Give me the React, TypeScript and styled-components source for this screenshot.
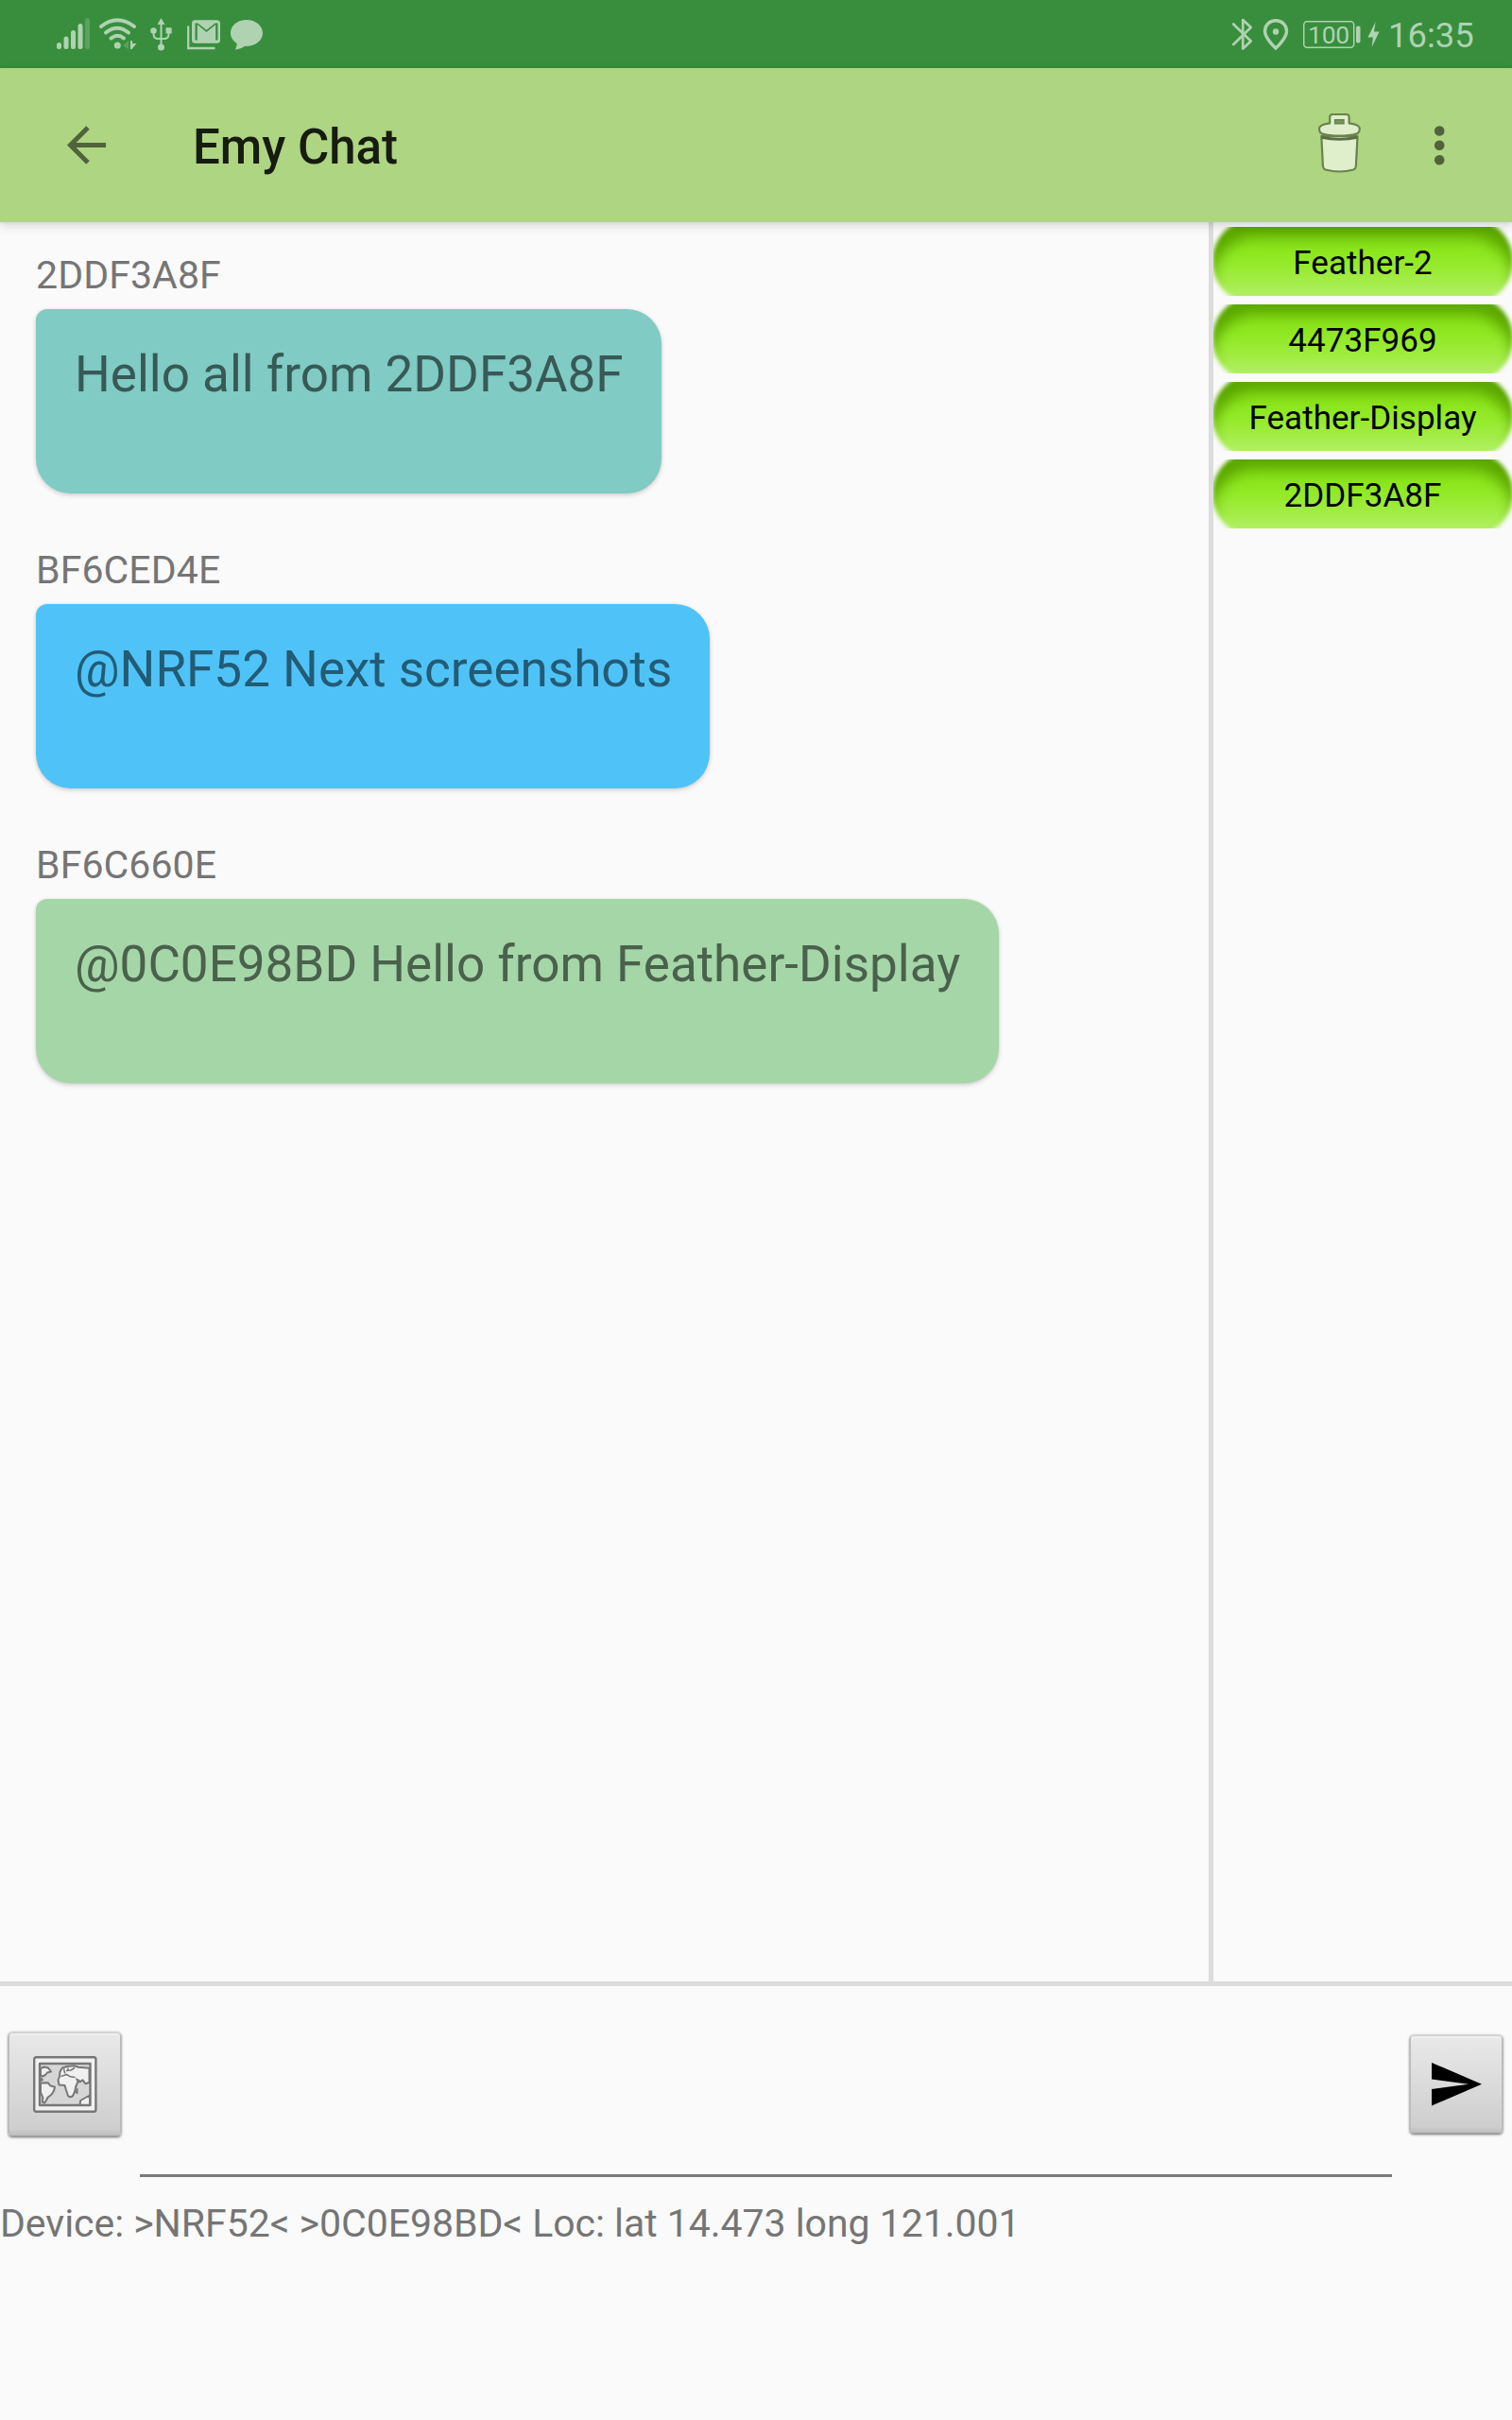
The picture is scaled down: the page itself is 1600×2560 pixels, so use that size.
import React from 'react';
import styled, { createGlobalStyle } from 'styled-components';

const GlobalStyle = createGlobalStyle`
  *, *::before, *::after { box-sizing: border-box; }
  body { margin: 0; background: #fafafa; font-family: Roboto, sans-serif; }
  svg { display: block; flex: none; }
`;

const Screen = styled.div`
  width: 1600px;
  height: 2560px;
  display: flex;
  flex-direction: column;
  background: #fafafa;
  overflow: hidden;
`;

const StatusBar = styled.div`
  height: 72px;
  flex: none;
  display: flex;
  justify-content: space-between;
  background: #388e3c;
  color: #afd2b1;
`;

const StatusGroup = styled.div`
  display: flex;
`;

const Clock = styled.span`
  font-size: 36.4px;
  line-height: 75px;
  width: 131px;
  white-space: nowrap;
`;

const AppBar = styled.header`
  height: 163px;
  flex: none;
  display: flex;
  align-items: center;
  background: #aed581;
  position: relative;
  z-index: 1;
  box-shadow: 0 4px 10px rgba(0, 0, 0, 0.13), 0 0 4px rgba(0, 0, 0, 0.1);
`;

const AppTitle = styled.h1`
  margin: 0 auto 0 92px;
  padding-top: 4px;
  font-size: 51px;
  font-weight: 500;
  line-height: 60px;
  color: #171c11;
`;

const IconButton = styled.button<{ $width: number; $before?: number }>`
  width: ${p => p.$width}px;
  margin-left: ${p => p.$before ?? 0}px;
  padding: 0;
  border: 0;
  background: none;
`;

const Body = styled.div`
  height: 1861px;
  flex: none;
  display: flex;
`;

const Messages = styled.main`
  width: 1279px;
  padding: 32px 0 0 38px;
`;

const Message = styled.article`
  height: 312px;
`;

const Sender = styled.div`
  height: 60px;
  font-size: 41px;
  line-height: 48px;
  letter-spacing: 0.1px;
  color: #757575;
`;

const Bubble = styled.div<{ $color: string; $ink: string; $width: number }>`
  width: ${p => p.$width}px;
  height: 195px;
  padding: 38px 0 0 41px;
  border-radius: 12px 37px 37px 37px;
  background: ${p => p.$color};
  color: ${p => p.$ink};
  font-size: 53px;
  line-height: 62px;
  white-space: nowrap;
  box-shadow: 0 2px 5px rgba(0, 0, 0, 0.17), 0 0 3px rgba(0, 0, 0, 0.07);
`;

const Members = styled.aside`
  width: 321px;
  padding-top: 5px;
  border-left: 5px solid #dcdcdc;
  display: flex;
  flex-direction: column;
  gap: 9px;
`;

const MemberButton = styled.button`
  height: 73px;
  flex: none;
  padding: 3px 0 0;
  border: 0;
  display: flex;
  align-items: center;
  justify-content: center;
  position: relative;
  overflow: hidden;
  background: none;
  font-family: inherit;
  font-size: 35px;
  letter-spacing: 0.05px;
  color: #000;
`;

const Pill = styled.span`
  position: absolute;
  inset: -9px -1px;
  border-radius: 46px;
  background: linear-gradient(#8be51a 30px, #93ea28 46px, #a3ec46 66px, #b0f063 82px);
  box-shadow: inset 0 20px 14px 0 #5ba600;
  filter: blur(2px);
`;

const MemberName = styled.span`
  position: relative;
`;

const Composer = styled.footer`
  height: 459px;
  border-top: 5px solid #dcdcdc;
`;

const InputRow = styled.div`
  height: 202px;
  display: flex;
`;

const ToolButton = styled.button<{ $width: number; $height: number; $top: number; $left: number }>`
  width: ${p => p.$width}px;
  height: ${p => p.$height}px;
  margin: ${p => p.$top}px 0 0 ${p => p.$left}px;
  flex: none;
  padding: 0;
  border: 1px solid;
  border-color: #d0d0d0 #bababa #a0a0a0;
  border-radius: 4px;
  display: flex;
  align-items: center;
  justify-content: center;
  background: linear-gradient(#e9e9e9, #dcdcdc 45%, #cecece 94%, #bdbdbd);
  box-shadow: 0 1px 3px rgba(0, 0, 0, 0.5), 0 0 3px rgba(0, 0, 0, 0.2), inset 0 2px 1px rgba(255, 255, 255, 0.3);
`;

const MessageInput = styled.input`
  width: 1325px;
  height: 202px;
  margin-left: 20px;
  padding: 0;
  border: 0;
  border-bottom: 3px solid #7b7b7b;
  outline: 0;
  background: none;
  font: 53px Roboto, sans-serif;
`;

const DeviceStatus = styled.div`
  padding-top: 25px;
  font-size: 41px;
  line-height: 48px;
  letter-spacing: -0.04px;
  color: #757575;
  white-space: nowrap;
`;

/* Signal, Wi-Fi, USB and notification glyphs share one canvas. */
const NotificationIcons = () => (
  <svg width="300" height="72" viewBox="0 0 300 72" fill="none" stroke="currentColor" strokeLinecap="round">
    <g strokeWidth="5">
      <path d="M62.5 47.5v2M70 41v8.5M77.5 34.5v15M85 27.500v22" />
      <path d="M92.500 21.500v28" opacity=".3" />
    </g>
    <g strokeWidth="4">
      <path d="M107 28Q124 14.500 142 28M112 34.500Q124 25 136 34.500M117.500 40.500Q124.500 35 131 40.500" />
    </g>
    <circle cx="124.300" cy="48" r="3.500" fill="currentColor" stroke="none" />
    <path d="M130 48l6-5v9z" fill="currentColor" stroke="none" opacity=".3" />
    <path d="M138 43h2v3h4.500l-5 6H138z" fill="currentColor" stroke="none" />
    <g strokeWidth="2">
      <path d="M170.500 24v26M162.500 32v4q0 5 5 5h6q5 0 5-5v-4" />
      <g fill="currentColor" stroke="none">
        <path d="M170.500 19l4 7h-8z" />
        <circle cx="162.500" cy="32.500" r="3.300" />
        <rect x="175.500" y="29.300" width="6.200" height="6.200" rx=".6" />
        <circle cx="170.500" cy="50" r="3.500" />
      </g>
    </g>
    <path d="M199.200 27.500v23.500H227.500" strokeWidth="2.300" strokeLinecap="butt" />
    <path
      d="M206.500 21.300h23q3.500 0 3.500 3.500v17.500q0 3.500-3.500 3.500h-23q-3.500 0-3.500-3.500V24.800q0-3.500 3.500-3.500zm0 3.200v18h2.300V26l9.700 8 9.700-8v16.500h2.300v-18h-2.800l-9.200 7.200-9.200-7.200z"
      fill="currentColor" stroke="none" fillRule="evenodd"
    />
    <path d="M261 21c-9.400 0-17 6.300-17 14 0 4.500 2.700 8.400 6.700 11-.1 2.400-.8 4.600-2 6.500 4.500-.5 8-1.600 10.500-3.700l1.800.1c9.400 0 17-6.200 17-13.900S270.400 21 261 21z" fill="currentColor" stroke="none" />
  </svg>
);

const SystemIcons = () => (
  <svg width="169" height="72" viewBox="1300 0 169 72" fill="none" stroke="currentColor">
    <path d="M1305.200 25.500l18.500 18-8.500 8V21l8.500 8-18.500 18" strokeWidth="2.700" strokeLinecap="round" strokeLinejoin="round" />
    <path d="M1350 21.800c-6.600 0-11.500 4.900-11.500 11.200 0 7.500 11.500 18 11.500 18s11.500-10.500 11.500-18c0-6.300-4.900-11.200-11.500-11.200z" strokeWidth="3.400" />
    <circle cx="1350" cy="33.500" r="3.200" fill="currentColor" stroke="none" />
    <rect x="1379.700" y="22.700" width="53" height="27.600" rx="3.500" strokeWidth="1.500" />
    <rect x="1435" y="27.500" width="4.500" height="18" rx="2" fill="currentColor" stroke="none" />
    <text x="1406" y="46" fontFamily="Roboto" fontSize="26.500" letterSpacing="-.3" textAnchor="middle" fill="currentColor" stroke="none">100</text>
    <path d="M1455.700 23l-8.300 16.500h5.500L1451.600 50l8-16.500H1454z" fill="currentColor" stroke="none" />
  </svg>
);

const BackIcon = () => (
  <svg width="41" height="42" viewBox="0 0 41 42" fill="none" stroke="#50633b" strokeWidth="5">
    <path d="M41 20.500H5M22 2L3.500 20.500 22 39" />
  </svg>
);

const TrashIcon = () => (
  <svg width="47" height="69" viewBox="0 0 47 69" fill="#dfeecb" stroke="#69824e" strokeWidth="2.200" strokeLinejoin="round">
    <path d="M4.300 25l1.600 31.500q.3 3 2.600 4 15 4 29.800 0 2.300-1 2.600-4L42.500 25z" />
    <path d="M4.500 26.200q18.900 4 37.800 0" stroke="#587040" strokeWidth="3" fill="none" />
    <path d="M13.200 11.300V4.800q0-2.800 2.800-2.800h14.800q2.800 0 2.800 2.800v6.500c7.500 1 11.200 3.200 11.200 5.700 0 3.500-.8 4.800-3.600 5.600-9 2.800-26.500 2.800-35.700 0C2.700 21.800 2 20.500 2 17c0-2.500 3.700-4.700 11.200-5.700z" />
    <path d="M18.700 7.700h9.200v4h-9.200z" fill="#78945b" strokeWidth="1.600" strokeLinejoin="miter" />
  </svg>
);

const MoreIcon = () => (
  <svg width="12" height="42" viewBox="0 0 12 42" fill="#50633b">
    <circle cx="6.200" cy="5.500" r="5.300" />
    <circle cx="6.200" cy="20.800" r="5.300" />
    <circle cx="6.200" cy="36.200" r="5.300" />
  </svg>
);

const MapIcon = () => (
  <svg width="68" height="60" viewBox="0 0 68 60" strokeLinejoin="round">
    <rect x="1.200" y="1.200" width="65.200" height="57.600" rx="2" fill="#f1f1f1" stroke="#777" strokeWidth="2.400" />
    <rect x="7" y="8" width="53.500" height="44" fill="#d6d6d6" />
    <g fill="#f0f0f0" stroke="#777" strokeWidth="2">
      <path d="M8 13l4-1.500 4 1 3 4-4 1-2 2.500-3 1.500-2-1zM8 23.500l2 1.500-2 1z" />
      <path d="M8 28.500l8-.3 2 3 5 1.500-1 4-2.500 4-4 3-1.500 3-2 3-2-1 .3-5-2.300-5z" />
      <path d="M31 12.500l5-1.500 7-.8 5 1.500 11.500 1V28l-4 1.300-3-4-2.500 2-2.500-.3-2.500 6-1 5-2 4q-2.500 2.500-5 0l-2-6-1.500-5-6-.5-1-5 1.500-4 .5-5z" />
      <path d="M46.800 34.500v5l-1.500-1z" strokeWidth="1.500" />
      <path d="M49.500 52l.7-5 9.800-5.500V52z" />
      <path d="M29.500 21.500l6-2 4 2.300 5 .7M32.500 13.500l1.300 5M35 15.500l5-.5 4-2.500M37 12.500v3M45.500 23.500l2 4M50 26.500l-3-2" fill="none" strokeWidth="1.500" />
    </g>
    <path d="M7 52V8h53.500v44z" fill="none" stroke="#777" strokeWidth="2.400" />
  </svg>
);

const SendIcon = () => (
  <svg width="53" height="46" viewBox="0 0 53 46">
    <path d="M0 0l53 22.700L0 45.500V28l39-5.300L0 17.500z" />
  </svg>
);

const messages = [
  { sender: '2DDF3A8F', text: 'Hello all from 2DDF3A8F', color: '#80cbc4', ink: '#385956', width: 662 },
  { sender: 'BF6CED4E', text: '@NRF52 Next screenshots', color: '#4fc3f7', ink: '#235b75', width: 713 },
  { sender: 'BF6C660E', text: '@0C0E98BD Hello from Feather-Display', color: '#a5d6a7', ink: '#4a614b', width: 1019 },
];

const members = ['Feather-2', '4473F969', 'Feather-Display', '2DDF3A8F'];

export default function App() {
  return (
    <Screen>
      <GlobalStyle />
      <StatusBar>
        <StatusGroup><NotificationIcons /></StatusGroup>
        <StatusGroup>
          <SystemIcons />
          <Clock>16:35</Clock>
        </StatusGroup>
      </StatusBar>
      <AppBar>
        <IconButton $width={41} $before={71} aria-label="Back"><BackIcon /></IconButton>
        <AppTitle>Emy Chat</AppTitle>
        <IconButton $width={47} aria-label="Clear chat"><TrashIcon /></IconButton>
        <IconButton $width={83} $before={76} aria-label="More options"><MoreIcon /></IconButton>
      </AppBar>
      <Body>
        <Messages>
          {messages.map(m => (
            <Message key={m.sender}>
              <Sender>{m.sender}</Sender>
              <Bubble $color={m.color} $ink={m.ink} $width={m.width}>{m.text}</Bubble>
            </Message>
          ))}
        </Messages>
        <Members>
          {members.map(name => (
            <MemberButton key={name}>
              <Pill />
              <MemberName>{name}</MemberName>
            </MemberButton>
          ))}
        </Members>
      </Body>
      <Composer>
        <InputRow>
          <ToolButton $width={119} $height={110} $top={49} $left={9} aria-label="Send location"><MapIcon /></ToolButton>
          <MessageInput aria-label="Message" />
          <ToolButton $width={98} $height={104} $top={52} $left={19} aria-label="Send"><SendIcon /></ToolButton>
        </InputRow>
        <DeviceStatus>Device: &gt;NRF52&lt; &gt;0C0E98BD&lt; Loc: lat 14.473 long 121.001</DeviceStatus>
      </Composer>
    </Screen>
  );
}
